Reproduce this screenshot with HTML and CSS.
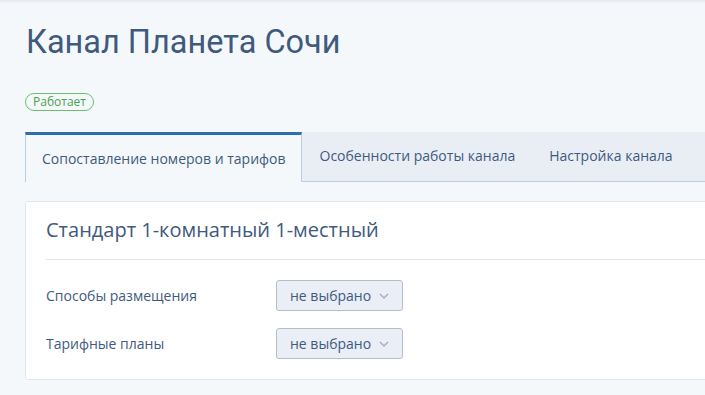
FILE: index.html
```html
<!DOCTYPE html>
<html lang="ru">

<head>
    <meta charset="UTF-8">
    <meta name="viewport" content="width=device-width, initial-scale=1.0">
    <title>Канал Планета Сочи</title>
    <link rel="stylesheet" href="styles.css">
</head>

<body>
    <div class="topbar"></div>
    <div class="page">
        <h1 class="title">Канал Планета Сочи</h1>

        <span class="status">Работает</span>

        <div class="tabs">
            <div class="tab active">Сопоставление номеров и тарифов</div>
            <div class="tab">Особенности работы канала</div>
            <div class="tab">Настройка канала</div>
            <div class="tab-rest"></div>
        </div>

        <div class="card">
            <h2 class="card-title">Стандарт 1-комнатный 1-местный</h2>

            <div class="row">
                <div class="label">Способы размещения</div>
                <button type="button" class="select">
                    не выбрано
                    <svg width="10" height="6" viewBox="0 0 10 6">
                        <path d="M1 1 L5 5 L9 1" fill="none" stroke="#a9b3bf" stroke-width="1.5"/>
                    </svg>
                </button>
            </div>

            <div class="row">
                <div class="label">Тарифные планы</div>
                <button type="button" class="select">
                    не выбрано
                    <svg width="10" height="6" viewBox="0 0 10 6">
                        <path d="M1 1 L5 5 L9 1" fill="none" stroke="#a9b3bf" stroke-width="1.5"/>
                    </svg>
                </button>
            </div>
        </div>
    </div>
</body>

</html>
```

FILE: styles.css
```css
body {
    margin: 0;
    background-color: #f5f8fb;
    font-family: "Open Sans", "Liberation Sans", sans-serif;
    overflow: hidden;
}

.topbar {
    height: 4px;
    background: linear-gradient(#e6eaef, #f5f8fb);
}

.page {
    padding-left: 25px;
    width: 760px;
}

.title {
    margin: 18px 0 0 1px;
    font-family: Roboto, "Liberation Sans", sans-serif;
    font-weight: 400;
    font-size: 32.5px;
    line-height: 40px;
    color: #3f5a7d;
}

.status {
    display: inline-block;
    margin-top: 31px;
    padding: 0 7px;
    height: 16px;
    line-height: 15px;
    font-size: 12px;
    color: #4aa34a;
    border: 1px solid #6cc06c;
    border-radius: 9px;
}

.tabs {
    display: flex;
    margin-top: 21px;
    height: 50px;
}

.tab {
    line-height: 47px;
    font-size: 14px;
    color: #3f5a7d;
    background: #e9eef5;
    border-bottom: 1px solid #b9cde3;
}

.tab.active {
    padding: 0 15px 0 16px;
    background: #f5f8fb;
    border-top: 3px solid #2f6ead;
    border-left: 1px solid #b9cde3;
    border-right: 1px solid #b9cde3;
    border-bottom: none;
}

.tab + .tab {
    padding-left: 18px;
    padding-right: 16px;
}

.tab-rest {
    flex: 1;
    background: #e9eef5;
    border-bottom: 1px solid #b9cde3;
}

.card {
    margin-top: 19px;
    padding: 0 0 20px 20px;
    background: #fff;
    border: 1px solid #dfe6ee;
    border-radius: 3px;
}

.card-title {
    margin: 0;
    padding: 13px 0 14px;
    font-weight: 400;
    font-size: 20px;
    line-height: 30px;
    color: #3f5a7d;
    border-bottom: 1px solid #dfe6ee;
}

.row {
    display: flex;
    align-items: center;
    margin-top: 20px;
}

.row + .row {
    margin-top: 17px;
}

.label {
    width: 230px;
    font-size: 14px;
    color: #3f5a7d;
}

.select {
    display: flex;
    align-items: center;
    gap: 8px;
    height: 31px;
    padding: 0 13px 0 13px;
    font-family: "Open Sans", "Liberation Sans", sans-serif;
    font-size: 14px;
    color: #3f5a7d;
    background: #e9eef7;
    border: 1px solid #b5bfcc;
    border-radius: 3px;
}
```
